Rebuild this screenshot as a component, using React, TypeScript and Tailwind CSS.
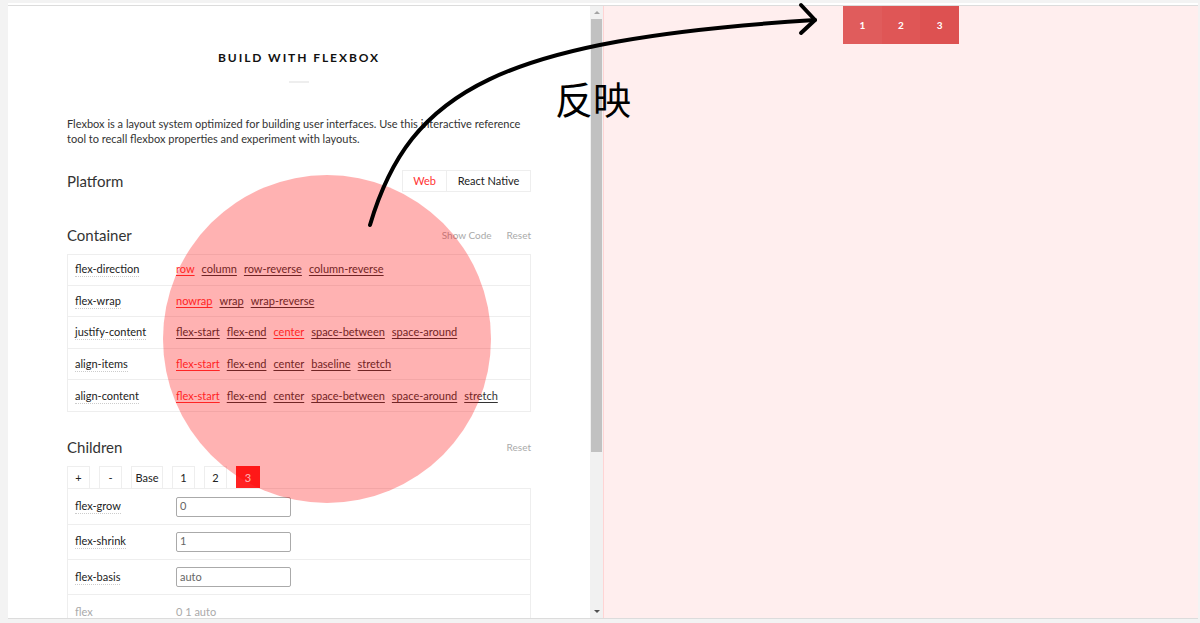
import React from 'react';

type Opt = { label: string; active?: boolean };

const containerRows: { name: string; options: Opt[] }[] = [
  {
    name: 'flex-direction',
    options: [{ label: 'row', active: true }, { label: 'column' }, { label: 'row-reverse' }, { label: 'column-reverse' }],
  },
  {
    name: 'flex-wrap',
    options: [{ label: 'nowrap', active: true }, { label: 'wrap' }, { label: 'wrap-reverse' }],
  },
  {
    name: 'justify-content',
    options: [
      { label: 'flex-start' },
      { label: 'flex-end' },
      { label: 'center', active: true },
      { label: 'space-between' },
      { label: 'space-around' },
    ],
  },
  {
    name: 'align-items',
    options: [
      { label: 'flex-start', active: true },
      { label: 'flex-end' },
      { label: 'center' },
      { label: 'baseline' },
      { label: 'stretch' },
    ],
  },
  {
    name: 'align-content',
    options: [
      { label: 'flex-start', active: true },
      { label: 'flex-end' },
      { label: 'center' },
      { label: 'space-between' },
      { label: 'space-around' },
      { label: 'stretch' },
    ],
  },
];

const childRows = [
  { name: 'flex-grow', value: '0' },
  { name: 'flex-shrink', value: '1' },
  { name: 'flex-basis', value: 'auto' },
];

const tabs = [
  { label: '+', w: 'w-[23px]' },
  { label: '-', w: 'w-[23px]' },
  { label: 'Base', w: 'w-[32px]' },
  { label: '1', w: 'w-[23px]' },
  { label: '2', w: 'w-[23px]' },
  { label: '3', w: 'w-[24px]', active: true },
];

function Label({ children, muted }: { children: React.ReactNode; muted?: boolean }) {
  return (
    <div className="w-[101px] shrink-0">
      <span
        className={`border-b border-dotted border-[#ccc] pb-[1px] ${muted ? 'text-[#aaa]' : 'text-[#222]'}`}
      >
        {children}
      </span>
    </div>
  );
}

function Panel() {
  return (
    <div className="w-[582px] shrink-0 bg-white overflow-hidden">
      <div className="w-[464px] mx-auto flex flex-col">
        <h1 className="mt-[44px] text-center text-[12px] leading-[16px] font-bold tracking-[0.16em] text-[#111]">
          BUILD WITH FLEXBOX
        </h1>
        <div className="mt-[15px] mx-auto w-[20px] h-[2px] bg-[#eee]" />
        <p className="mt-[33px] text-[11px] leading-[15px] text-[#333]">
          Flexbox is a layout system optimized for building user interfaces. Use this interactive reference tool to
          recall flexbox properties and experiment with layouts.
        </p>

        <div className="mt-[24px] flex items-center justify-between">
          <h2 className="text-[15px] text-[#333]">Platform</h2>
          <div className="flex h-[22px] border border-[#eee] text-[11px]">
            <div className="w-[44px] flex items-center justify-center text-[#f33] border-r border-[#eee]">Web</div>
            <div className="w-[83px] flex items-center justify-center text-[#222]">React Native</div>
          </div>
        </div>

        <div className="mt-[32px] h-[22px] flex items-center justify-between">
          <h2 className="text-[15px] text-[#333]">Container</h2>
          <div className="flex gap-[15px] text-[10px] text-[#aaa]">
            <span>Show Code</span>
            <span>Reset</span>
          </div>
        </div>

        <div className="mt-[7px] border border-[#eee] text-[11px]">
          {containerRows.map((row, i) => (
            <div
              key={row.name}
              className={`h-[31.4px] flex items-center pl-[7px] ${i < containerRows.length - 1 ? 'border-b border-[#eee]' : ''}`}
            >
              <Label>{row.name}</Label>
              <div className="flex gap-[7px]">
                {row.options.map((o) => (
                  <span key={o.label} className={`underline underline-offset-2 ${o.active ? 'text-[#f33]' : 'text-[#333]'}`}>
                    {o.label}
                  </span>
                ))}
              </div>
            </div>
          ))}
        </div>

        <div className="mt-[24px] h-[22px] flex items-center justify-between">
          <h2 className="text-[15px] text-[#333]">Children</h2>
          <span className="text-[10px] text-[#aaa]">Reset</span>
        </div>

        <div className="mt-[8px] flex gap-[9px] text-[11px]">
          {tabs.map((t) => (
            <div
              key={t.label}
              className={`${t.w} h-[23px] flex items-center justify-center border-t border-l border-r ${
                t.active ? 'bg-[#f22] border-[#f22] text-white' : 'border-[#eee] text-[#222]'
              }`}
            >
              {t.label}
            </div>
          ))}
        </div>

        <div className="-mt-[1px] border border-[#eee] text-[11px]">
          {childRows.map((row) => (
            <div key={row.name} className="h-[35.2px] flex items-center pl-[7px] border-b border-[#eee]">
              <Label>{row.name}</Label>
              <div className="w-[115px] h-[20px] border border-[#aaa] rounded-[2px] flex items-center pl-[3px] text-[#666]">
                {row.value}
              </div>
            </div>
          ))}
          <div className="h-[35px] flex items-center pl-[7px] text-[#aaa]">
            <Label muted>flex</Label>
            <span>0 1 auto</span>
          </div>
        </div>
      </div>
    </div>
  );
}

function Scrollbar() {
  return (
    <div className="w-[13px] shrink-0 bg-[#f1f1f1] flex flex-col items-center">
      <div className="h-[13px] flex items-center justify-center">
        <div className="w-0 h-0 border-l-[3px] border-r-[3px] border-b-[3px] border-l-transparent border-r-transparent border-b-[#a3a3a3]" />
      </div>
      <div className="w-[11px] h-[433px] bg-[#c1c1c1]" />
      <div className="flex-1" />
      <div className="h-[13px] flex items-center justify-center">
        <div className="w-0 h-0 border-l-[3px] border-r-[3px] border-t-[3px] border-l-transparent border-r-transparent border-t-[#505050]" />
      </div>
    </div>
  );
}

function Preview() {
  const items = [
    { n: '1', c: 'bg-[#e05c5c]' },
    { n: '2', c: 'bg-[#df5656]' },
    { n: '3', c: 'bg-[#dd5151]' },
  ];
  return (
    <div className="flex-1 bg-[#ffeeee] border-l border-[#ffd4d4] flex justify-center items-start">
      {items.map((it) => (
        <div
          key={it.n}
          className={`${it.c} w-[38.7px] h-[38px] flex items-center justify-center text-white text-[10px] font-bold`}
        >
          {it.n}
        </div>
      ))}
    </div>
  );
}

export default function App() {
  return (
    <div
      className="relative w-[1200px] h-[623px] bg-[#f3f3f3] pl-[8px] pr-[2px] pt-[3px] pb-[4px] overflow-hidden"
      style={{ fontFamily: 'Lato, "Noto Sans", sans-serif' }}
    >
      <div className="h-full flex flex-col border-t-2 border-white">
        <div className="flex-1 flex border-t border-b border-[#dcdcdc] overflow-hidden">
          <Panel />
          <Scrollbar />
          <Preview />
        </div>
      </div>

      {/* annotation overlay */}
      <div className="absolute left-[163px] top-[175px] w-[328px] h-[328px] rounded-full bg-[#ff0000]/30 pointer-events-none" />
      <svg className="absolute left-0 top-0 pointer-events-none" width="1200" height="623">
        <path d="M370 225 C 410 90, 500 40, 815 20" fill="none" stroke="#000" strokeWidth="4" strokeLinecap="round" />
        <polyline points="801,5 815,20 801,33" fill="none" stroke="#000" strokeWidth="4" strokeLinecap="round" strokeLinejoin="round" />
      </svg>
      <div
        className="absolute left-[555px] top-[70px] text-[38px] leading-[56px] text-black"
        style={{ fontFamily: '"Noto Sans CJK SC", sans-serif' }}
      >
        反映
      </div>
    </div>
  );
}
